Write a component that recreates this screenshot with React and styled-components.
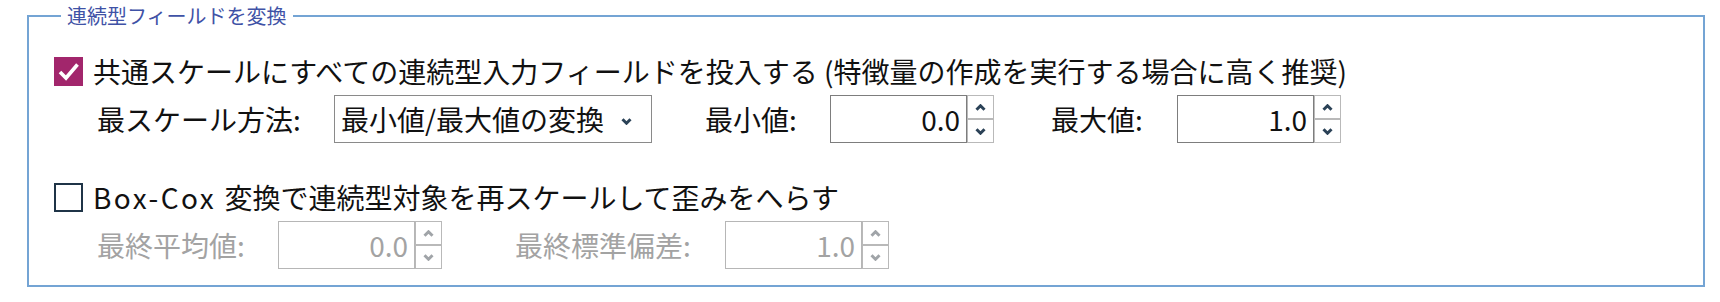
import styled, { createGlobalStyle } from "styled-components";

const GlobalStyle = createGlobalStyle`
  html, body {
    margin: 0;
    padding: 0;
    background: #ffffff;
  }
  body {
    font-family: "Noto Sans CJK JP", "Liberation Sans", sans-serif;
    color: #111111;
  }
`;

const Group = styled.fieldset`
  margin: 2px 15px 0 27px;
  border: 2px solid #74a4d4;
  padding: 24px 0 16px 25px;
  min-width: 0;
`;

const Legend = styled.legend`
  margin-left: 7px;
  padding: 0 6px;
  font-size: 20px;
  line-height: 28px;
  color: #3f52a6;
`;

const Body = styled.div`
  display: flex;
  flex-direction: column;
  gap: 37px;
`;

const Section = styled.div`
  display: flex;
  flex-direction: column;
  gap: 7px;
`;

const CheckRow = styled.label`
  display: flex;
  align-items: center;
  gap: 10px;
  height: 34px;
  font-size: 28px;
  line-height: 34px;
  color: #111111;
  white-space: nowrap;
`;

const Latin = styled.span`
  letter-spacing: 2.4px;
  margin-right: 2px;
`;

const Box = styled.span`
  flex: none;
  width: 29px;
  height: 29px;
  box-sizing: border-box;
  display: flex;
  align-items: center;
  justify-content: center;
  background: ${(p) => (p.$checked ? "#a2266c" : "#ffffff")};
  border: ${(p) => (p.$checked ? "none" : "2px solid #1f3447")};
`;

const ParamRow = styled.div`
  display: flex;
  align-items: center;
  height: 48px;
  padding-left: 43px;
`;

const Label = styled.span`
  flex: none;
  width: ${(p) => p.$w}px;
  margin-left: ${(p) => p.$ml || 0}px;
  font-size: 28px;
  white-space: nowrap;
  color: ${(p) => (p.$disabled ? "#a3a3a3" : "#111111")};
`;

const Select = styled.div`
  flex: none;
  width: 318px;
  height: 48px;
  box-sizing: border-box;
  border: 1px solid #8a8a8a;
  display: flex;
  align-items: center;
  justify-content: space-between;
  padding: 0 19px 0 6px;
  font-size: 28px;
  background: #ffffff;
`;

const Arrow = styled.span`
  display: flex;
  margin-top: 5px;
  color: #2b4257;
`;

const NumberField = styled.div`
  flex: none;
  display: flex;
  height: 48px;
`;

const NumInput = styled.div`
  width: 137px;
  height: 48px;
  box-sizing: border-box;
  border: 1px solid ${(p) => (p.$disabled ? "#b6b6b6" : "#7d7d7d")};
  padding-right: 6px;
  text-align: right;
  font-size: 28px;
  line-height: 46px;
  color: ${(p) => (p.$disabled ? "#a3a3a3" : "#111111")};
`;

const Spinner = styled.div`
  width: 27px;
  height: 48px;
  display: flex;
  flex-direction: column;
`;

const SpinBtn = styled.div`
  flex: 1;
  box-sizing: border-box;
  border: 1px solid #b9b9b9;
  display: flex;
  align-items: center;
  justify-content: center;
  color: ${(p) => (p.$disabled ? "#a0a4a8" : "#2b4257")};
`;

const Chevron = ({ up }) => (
  <svg width="11" height="7" viewBox="0 0 11 7">
    <polyline
      points={up ? "1.5,5.8 5.5,1.8 9.5,5.8" : "1.5,1.2 5.5,5.2 9.5,1.2"}
      fill="none"
      stroke="currentColor"
      strokeWidth="3"
    />
  </svg>
);

const Tick = () => (
  <svg width="29" height="29" viewBox="0 0 29 29">
    <polyline
      points="6,15 12,21 23.5,7.5"
      fill="none"
      stroke="#ffffff"
      strokeWidth="3.6"
    />
  </svg>
);

const Number = ({ value, disabled }) => (
  <NumberField>
    <NumInput $disabled={disabled}>{value}</NumInput>
    <Spinner>
      <SpinBtn $disabled={disabled}>
        <Chevron up />
      </SpinBtn>
      <SpinBtn $disabled={disabled}>
        <Chevron />
      </SpinBtn>
    </Spinner>
  </NumberField>
);

const App = () => {
  return (
    <>
      <GlobalStyle />
      <Group>
        <Legend>連続型フィールドを変換</Legend>
        <Body>
          <Section>
            <CheckRow>
              <Box $checked>
                <Tick />
              </Box>
              共通スケールにすべての連続型入力フィールドを投入する (特徴量の作成を実行する場合に高く推奨)
            </CheckRow>
            <ParamRow>
              <Label $w={237}>最スケール方法:</Label>
              <Select>
                <span>最小値/最大値の変換</span>
                <Arrow>
                  <Chevron />
                </Arrow>
              </Select>
              <Label $w={125} $ml={53}>最小値:</Label>
              <Number value="0.0" />
              <Label $w={126} $ml={57}>最大値:</Label>
              <Number value="1.0" />
            </ParamRow>
          </Section>
          <Section>
            <CheckRow>
              <Box />
              <span>
                <Latin>Box-Cox</Latin> 変換で連続型対象を再スケールして歪みをへらす
              </span>
            </CheckRow>
            <ParamRow>
              <Label $w={181} $disabled>最終平均値:</Label>
              <Number value="0.0" disabled />
              <Label $w={210} $ml={73} $disabled>最終標準偏差:</Label>
              <Number value="1.0" disabled />
            </ParamRow>
          </Section>
        </Body>
      </Group>
    </>
  );
};

export default App;
